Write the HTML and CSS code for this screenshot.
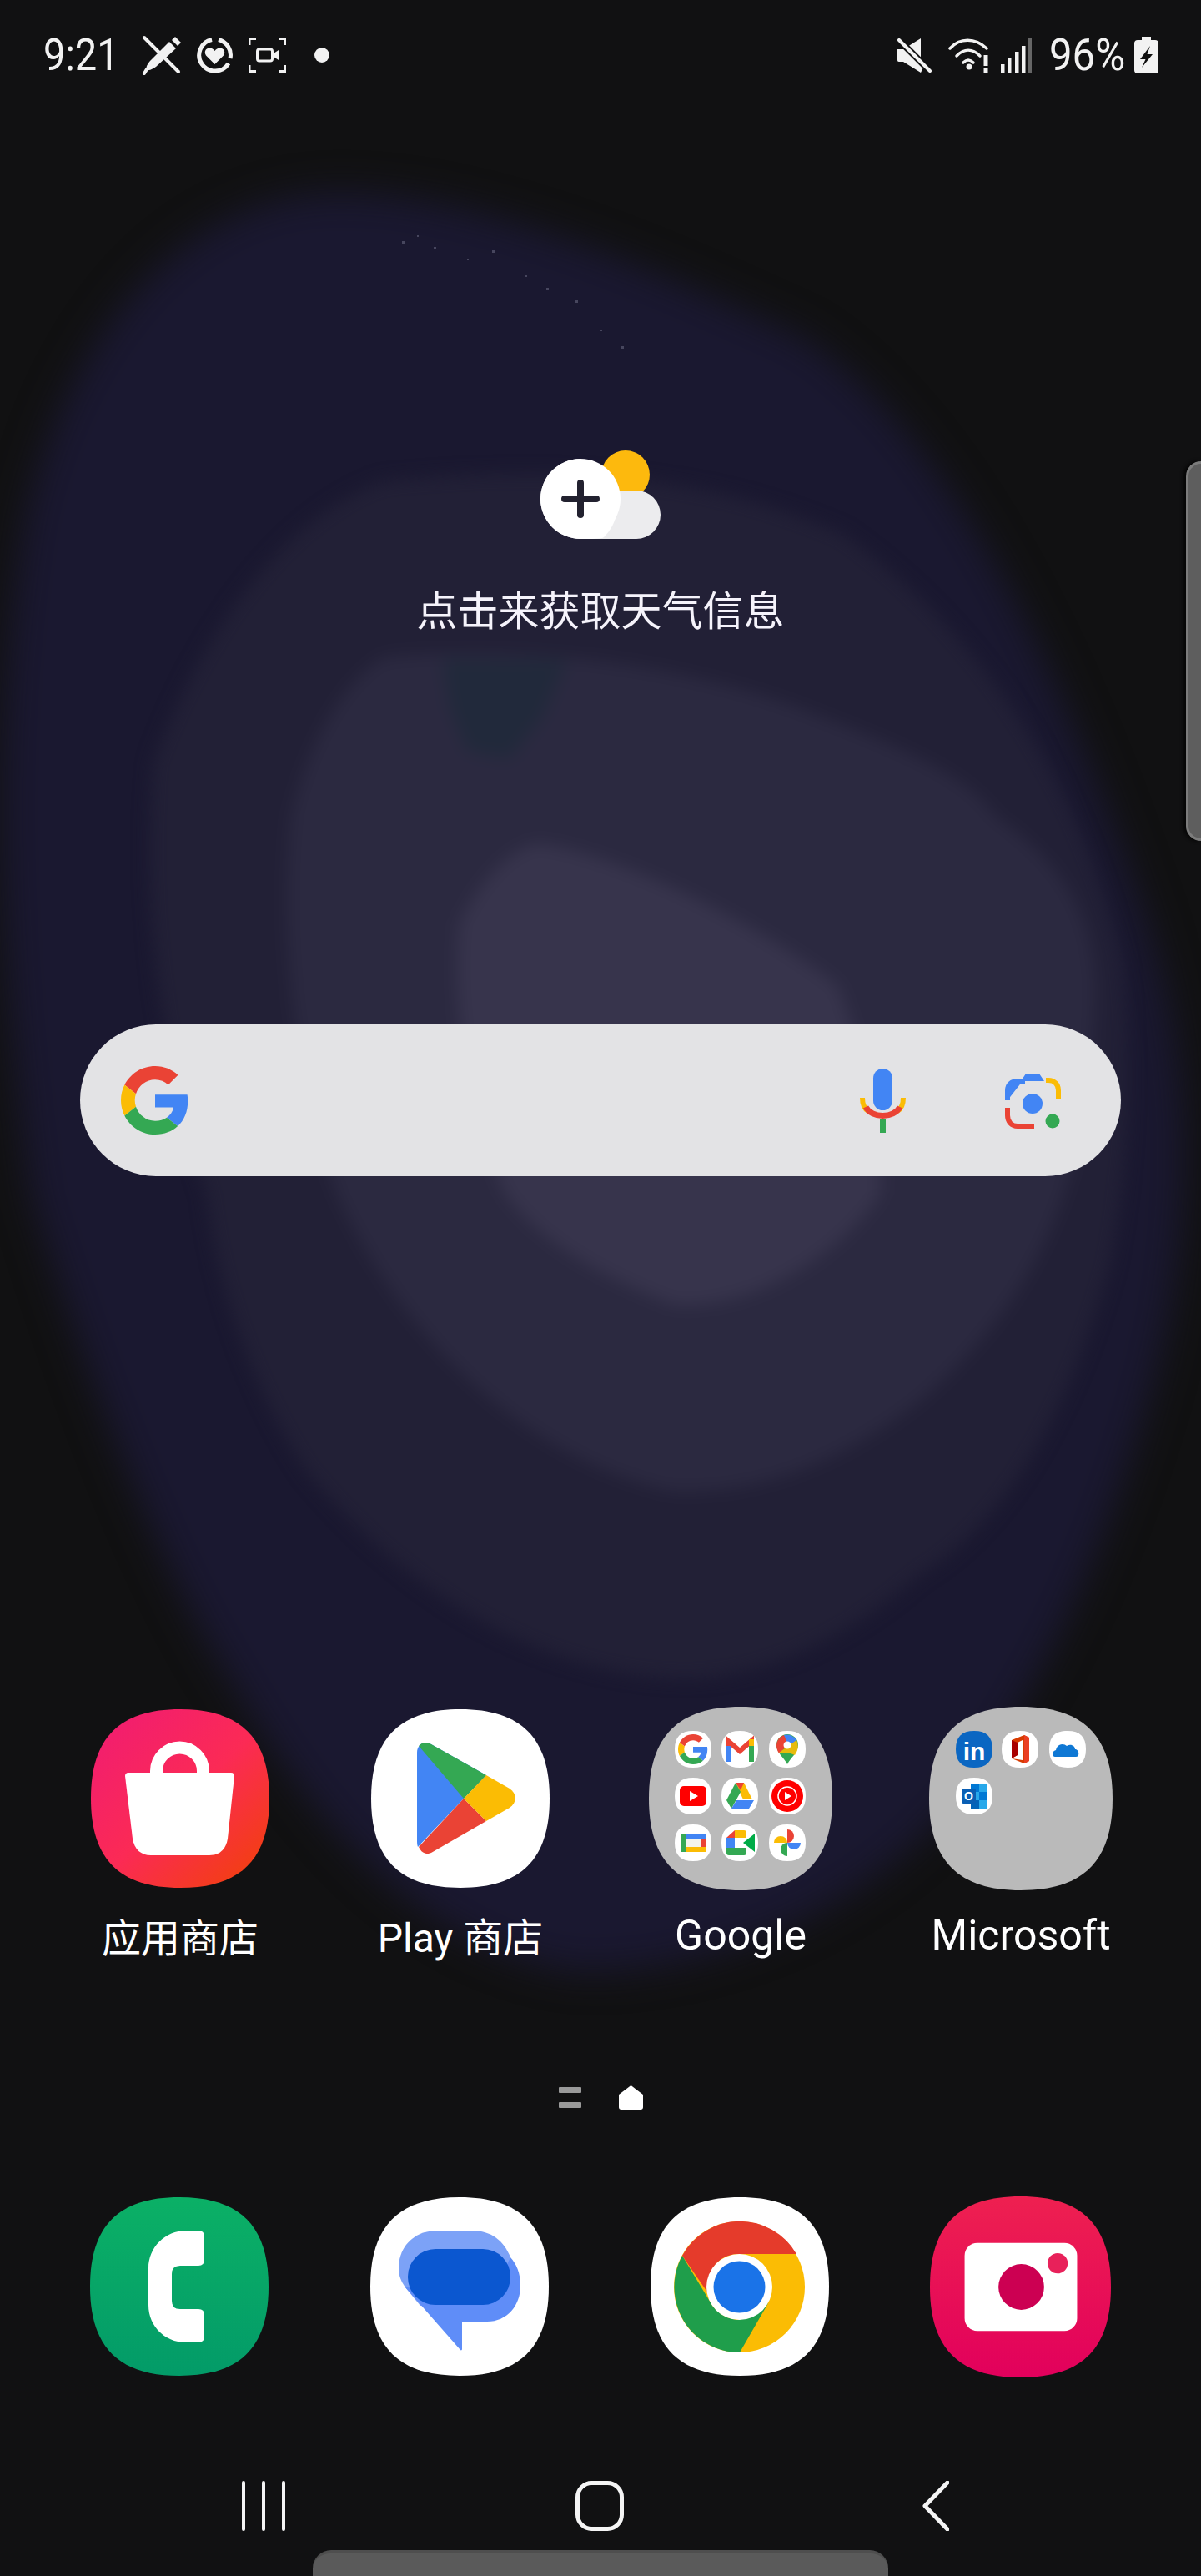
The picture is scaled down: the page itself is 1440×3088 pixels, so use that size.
FILE: index.html
```html
<!DOCTYPE html>
<html lang="zh">
<head>
<meta charset="utf-8">
<title>Home screen</title>
<link rel="stylesheet" href="styles.css">
</head>
<body>
<svg class="defs" aria-hidden="true">
  <defs>
    <path id="sq" d="M50 0C84 0 100 16 100 50C100 84 84 100 50 100C16 100 0 84 0 50C0 16 16 0 50 0Z"/>
    <linearGradient id="shop" x1="0.1" y1="0.1" x2="0.9" y2="0.95"><stop offset="0" stop-color="#f21e6e"/><stop offset="0.5" stop-color="#fb2a55"/><stop offset="1" stop-color="#f23f10"/></linearGradient>
    <linearGradient id="call" x1="0" y1="0" x2="0" y2="1"><stop offset="0" stop-color="#0bb066"/><stop offset="1" stop-color="#039b68"/></linearGradient>
    <linearGradient id="cam" x1="0" y1="0" x2="0" y2="1"><stop offset="0" stop-color="#ee2050"/><stop offset="1" stop-color="#e2005c"/></linearGradient>
    <symbol id="gg" viewBox="0 0 48 48">
      <path fill="#EA4335" d="M24 9.5c3.54 0 6.71 1.22 9.21 3.6l6.85-6.85C35.9 2.38 30.47 0 24 0 14.62 0 6.51 5.38 2.56 13.22l7.98 6.19C12.43 13.72 17.74 9.5 24 9.5z"/>
      <path fill="#4285F4" d="M46.98 24.55c0-1.57-.15-3.09-.38-4.55H24v9.02h12.94c-.58 2.96-2.26 5.48-4.78 7.18l7.73 6c4.51-4.18 7.09-10.36 7.09-17.65z"/>
      <path fill="#FBBC05" d="M10.53 28.59c-.48-1.45-.76-2.99-.76-4.59s.27-3.14.76-4.59l-7.98-6.19C.92 16.46 0 20.12 0 24c0 3.88.92 7.54 2.56 10.78l7.97-6.19z"/>
      <path fill="#34A853" d="M24 48c6.48 0 11.93-2.13 15.89-5.81l-7.73-6c-2.15 1.45-4.92 2.3-8.16 2.3-6.26 0-11.57-4.22-13.47-9.91l-7.98 6.19C6.51 42.62 14.62 48 24 48z"/>
    </symbol>
    <g id="tile"><use href="#sq" transform="translate(-22 -22) scale(.44)" fill="#fff"/></g>
  </defs>
</svg>

<main class="screen">
  <svg class="wallpaper" viewBox="0 0 1440 3088" aria-hidden="true">
    <defs>
      <filter id="soft" x="-15%" y="-15%" width="130%" height="130%" color-interpolation-filters="sRGB"><feGaussianBlur stdDeviation="10"/></filter>
      <filter id="softer" x="-15%" y="-15%" width="130%" height="130%" color-interpolation-filters="sRGB"><feGaussianBlur stdDeviation="22"/></filter>
    </defs>
    <path filter="url(#softer)" fill="#1a1830" d="M380 232C560 220 800 330 964 405C1120 510 1250 730 1377 1107C1440 1300 1430 1500 1377 1680C1320 1870 1260 1990 1194 2090C1100 2260 880 2370 690 2364C520 2340 380 2200 275 2012C190 1880 100 1640 37 1432C-10 1100 -10 850 30 620C70 440 190 250 380 232Z"/>
    <g filter="url(#soft)">
      <path fill="#222036" d="M459 577C640 560 830 560 1010 640C1180 760 1300 950 1345 1150C1360 1300 1350 1420 1331 1515C1280 1700 1200 1830 1102 1888C1020 1960 920 2010 826 2012C640 2010 480 1900 367 1763C300 1660 260 1540 248 1432C190 1260 170 1080 184 915C240 760 340 620 459 577Z"/>
      <path fill="#2b2940" d="M459 788C640 770 830 800 964 851C1090 900 1160 930 1194 979C1280 1040 1310 1100 1313 1183C1310 1420 1240 1560 1102 1680C1010 1750 920 1790 808 1788C630 1750 480 1600 404 1432C350 1280 335 1120 349 979C370 890 410 820 459 788Z"/>
      <path fill="#37344c" d="M643 1011C730 1020 900 1100 1005 1182C1040 1280 1060 1360 1056 1432C1000 1510 900 1570 808 1564C720 1530 650 1490 606 1432C560 1330 540 1200 551 1106C580 1050 610 1020 643 1011Z"/>
      <path fill="#1f2a3a" opacity=".75" d="M530 790H680L650 860L610 910L560 900L540 850Z"/>
    </g>
    <g fill="#47465e"><rect x="482" y="289" width="3" height="3"/><rect x="500" y="282" width="2" height="2"/><rect x="520" y="296" width="3" height="3"/><rect x="560" y="310" width="2" height="2"/><rect x="590" y="300" width="3" height="3"/><rect x="630" y="330" width="2" height="2"/><rect x="655" y="345" width="3" height="3"/><rect x="690" y="360" width="3" height="3"/><rect x="720" y="395" width="2" height="2"/><rect x="745" y="415" width="3" height="3"/></g>
  </svg>

  <header class="status">
    <div class="status-left">
      <span class="clock">9:21</span>
      <svg class="si si-pen" viewBox="0 0 48 48"><path d="M3 3L44 44" stroke="#f2f2f2" stroke-width="4" stroke-linecap="round"/><path d="M40 2L47 9L43 13L36 6Z" fill="#f2f2f2"/><path d="M33 8L41 16L17 38C12 42 8 42 5 43C5 39 6 35 10 31Z" fill="#f2f2f2"/><path d="M3 46L6 41" stroke="#f2f2f2" stroke-width="4" stroke-linecap="round"/></svg>
      <svg class="si si-heart" viewBox="0 0 45 45"><path d="M27 3.500A19 19 0 0 1 41 26" fill="none" stroke="#f2f2f2" stroke-width="5"/><path d="M39 32A19 19 0 1 1 19 3.500" fill="none" stroke="#f2f2f2" stroke-width="5"/><path d="M22.500 33L12 22.500C9 18 12 13.500 16 13.500C19 13.500 21 15 22.500 17C24 15 26 13.500 29 13.500C33 13.500 36 18 33 22.500Z" fill="#f2f2f2"/></svg>
      <svg class="si si-rec" viewBox="0 0 45 42"><path d="M1 9V1.500H9M36 1.500H44V9M44 33V40.500H36M9 40.500H1V33" fill="none" stroke="#f2f2f2" stroke-width="3"/><rect x="10.500" y="14" width="18" height="14" rx="2.500" fill="none" stroke="#f2f2f2" stroke-width="3"/><path d="M30 19L36 15V27L30 23Z" fill="#f2f2f2"/></svg>
      <span class="dot"></span>
    </div>
    <div class="status-right">
      <svg class="si si-mute" viewBox="0 0 42 41"><path d="M1 13H8L29 0V24L40 38L33 33L29 41L8 28H3C1 28 1 27 1 25Z" fill="#f2f2f2"/><path d="M2 1L42 41" stroke="#111" stroke-width="8"/><path d="M3 2L40 39" stroke="#f2f2f2" stroke-width="4" stroke-linecap="round"/></svg>
      <svg class="si si-wifi" viewBox="0 0 50 44"><g fill="none" stroke="#f2f2f2" stroke-width="3.500" stroke-linecap="round"><path d="M2 14C14 1 32 1 46 14"/><path d="M10 23C19 14 29 14 38 23"/><path d="M18 31C22 27 26 27 30 31"/></g><circle cx="25" cy="36" r="3.500" fill="#f2f2f2"/><path d="M45 22V35" stroke="#f2f2f2" stroke-width="5"/><rect x="42.500" y="38" width="5" height="5" fill="#f2f2f2"/></svg>
      <svg class="si si-signal" viewBox="0 0 38 43"><g fill="#f2f2f2"><rect x="0" y="32" width="4.500" height="11"/><rect x="8" y="25" width="4.500" height="18"/><rect x="17" y="17" width="4.500" height="26"/><rect x="25" y="10" width="4.500" height="33"/></g><rect x="32" y="0" width="5" height="43" fill="#666"/></svg>
      <span class="batt-text">96%</span>
      <svg class="si si-batt" viewBox="0 0 29 44"><path d="M9 0H20V4H25C27.500 4 29 5.500 29 8V40C29 42.500 27.500 44 25 44H4C1.500 44 0 42.500 0 40V8C0 5.500 1.500 4 4 4H9Z" fill="#f2f2f2"/><path d="M19 11L7 27H13.500L9 37L22 21H15.500Z" fill="#111"/></svg>
    </div>
  </header>

  <section class="weather">
    <svg class="weather-icon" viewBox="0 0 144 106">
      <circle cx="102" cy="29" r="29" fill="#fdb90d"/>
      <path d="M48 106A47 47 0 0 1 48 10L48 48H115A29 29 0 0 1 115 106Z" fill="#ececee"/>
      <circle cx="48" cy="58" r="48" fill="#fff"/>
      <path d="M48 106C60 106 74 106 76 104C90 90 96 70 90 48L48 48Z" fill="#fff"/>
      <path d="M29 58H67M48 39V77" stroke="#22212f" stroke-width="8" stroke-linecap="round"/>
    </svg>
    <p class="weather-text">点击来获取天气信息</p>
  </section>

  <section class="search">
    <svg class="s-g"><use href="#gg"/></svg>
    <svg class="s-mic" viewBox="0 0 55 77">
      <rect x="16" y="0" width="23" height="50" rx="11.500" fill="#4285f4"/>
      <path d="M3 35C3 43 5 48 10 51" fill="none" stroke="#fbbc05" stroke-width="6"/>
      <path d="M52 35C52 43 50 48 45 51" fill="none" stroke="#fbbc05" stroke-width="6"/>
      <path d="M7 46C14 60 41 60 48 46" fill="none" stroke="#ea4335" stroke-width="7"/>
      <path d="M27.500 60V77" stroke="#34a853" stroke-width="7"/>
    </svg>
    <svg class="s-lens" viewBox="0 0 67 69">
      <path d="M3 34V22C3 15 8 11 15 11H19L25 2H41L47 11H21Z" fill="#4285f4"/>
      <path d="M3 34V22C3 15 8 11 15 11H24" fill="none" stroke="#4285f4" stroke-width="6"/>
      <path d="M49 10H52C59 10 64 15 64 22V32" fill="none" stroke="#fbbc05" stroke-width="6"/>
      <path d="M3 43V52C3 60 8 65 15 65H35" fill="none" stroke="#ea4335" stroke-width="6"/>
      <circle cx="33" cy="38" r="12" fill="#4285f4"/>
      <circle cx="57" cy="59" r="8.500" fill="#34a853"/>
    </svg>
  </section>

  <section class="apps">
    <div class="cell">
      <div class="icon-box">
        <svg class="app" viewBox="0 0 214 214">
          <use href="#sq" transform="scale(2.14)" fill="url(#shop)"/>
          <path d="M78.500 82V74A28 28 0 0 1 134.500 74V82" fill="none" stroke="#fff" stroke-width="15"/>
          <path d="M45 76H168C171 76 172 78 172 80L164 155C162 168 154 175 142 175H72C60 175 52 168 50 155L41 80C41 78 42 76 45 76Z" fill="#fff"/>
        </svg>
      </div>
      <span class="label label-cjk">应用商店</span>
    </div>
    <div class="cell">
      <div class="icon-box">
        <svg class="app" viewBox="0 0 214 214">
          <use href="#sq" transform="scale(2.14)" fill="#fff"/>
          <path d="M55 52C55 42 64 37 72 42L138 79L111 107L56 165C55 162 55 160 55 157Z" fill="#4285f4"/>
          <path d="M57 44C62 39 67 39 72 42L138 79L111 107Z" fill="#34a853"/>
          <path d="M57 165C60 172 66 175 72 172L138 134L111 107Z" fill="#ea4335"/>
          <path d="M138 79L166 95C175 101 175 112 166 118L138 134L111 107Z" fill="#fbbc04"/>
        </svg>
      </div>
      <span class="label label-play">Play 商店</span>
    </div>
    <div class="cell">
      <div class="icon-box">
        <svg class="folder" viewBox="0 0 220 220">
          <use href="#sq" transform="scale(2.2)" fill="#bababa"/>
          <g transform="translate(53 51)"><use href="#tile"/><use href="#gg" x="-18" y="-18" width="36" height="36"/></g>
          <g transform="translate(109 51)"><use href="#tile"/>
            <path d="M-14 15V-10L0 2L14 -10V15" fill="none" stroke="#ea4335" stroke-width="6"/><path d="M-14 15V-4" stroke="#4285f4" stroke-width="6"/><path d="M14 15V-4" stroke="#34a853" stroke-width="6"/><path d="M14 -12V-4" stroke="#fbbc04" stroke-width="6"/></g>
          <g transform="translate(166 51)"><use href="#tile"/>
            <path d="M0 18C-4 10 -13 4 -13 -5A13 13 0 0 1 13 -5C13 4 4 10 0 18Z" fill="#34a853"/><path d="M-13 -5A13 13 0 0 1 -4 -17L4 -8L-10 5C-12 2 -13 -2 -13 -5Z" fill="#ea4335"/><path d="M-4 -17A13 13 0 0 1 11 -11L2 -3Z" fill="#4285f4"/><path d="M-10 4L11 -11C14 -4 13 1 9 7L4 5Z" fill="#fbbc04" opacity=".9"/><circle cy="-5" r="4.500" fill="#fff"/></g>
          <g transform="translate(53 107)"><use href="#tile"/>
            <rect x="-16" y="-12" width="32" height="24" rx="5" fill="#f00"/><path d="M-4 -6L6 0L-4 6Z" fill="#fff"/></g>
          <g transform="translate(109 107)"><use href="#tile"/>
            <path d="M-5 -16H5L15 4H4Z" fill="#fbbc04"/><path d="M-5 -16L-16 5L-10 15L1 -5Z" fill="#34a853"/><path d="M-10 15H11L17 5H-4Z" fill="#4285f4"/><path d="M-5 -16H5L1 -7Z" fill="#ea4335"/></g>
          <g transform="translate(166 107)"><use href="#tile"/>
            <circle r="19" fill="#f00"/><circle r="11" fill="none" stroke="#fff" stroke-width="1.500"/><circle r="7" fill="#f00"/><path d="M-3 -5L5 0L-3 5Z" fill="#fff"/></g>
          <g transform="translate(53 163)"><use href="#tile"/>
            <rect x="-15" y="-11" width="30" height="22" rx="2" fill="#f4f4ec"/><path d="M-15 -11H15V-5H-15Z" fill="#4285f4"/><path d="M-15 -11V11H-9V-11Z" fill="#34a853"/><path d="M15 -5V11H9V-5Z" fill="#ea4335"/><path d="M-9 5H15V11H-9Z" fill="#fbbc04"/></g>
          <g transform="translate(109 163)"><use href="#tile"/>
            <path d="M-16 -6L-6 -15V-6Z" fill="#ea4335"/><path d="M-6 -15H5Q8 -15 8 -12V-6H-6Z" fill="#fbbc04"/><path d="M-16 -6H-6V6H-16Z" fill="#4285f4"/><path d="M-16 6H8V12Q8 15 5 15H-13Q-16 15 -16 12Z" fill="#34a853"/><path d="M4 0L18 -11V11Z" fill="#00ac47"/><rect x="-6" y="-6" width="10" height="12" fill="#fff"/></g>
          <g transform="translate(166 163)"><use href="#tile"/>
            <path d="M0 0V-16A8 8 0 0 1 0 0Z" fill="#ea4335"/><path d="M0 0H16A8 8 0 0 1 0 0Z" fill="#4285f4"/><path d="M0 0V16A8 8 0 0 1 0 0Z" fill="#34a853"/><path d="M0 0H-16A8 8 0 0 1 0 0Z" fill="#fbbc04"/></g>
        </svg>
      </div>
      <span class="label label-folder">Google</span>
    </div>
    <div class="cell">
      <div class="icon-box">
        <svg class="folder" viewBox="0 0 220 220">
          <use href="#sq" transform="scale(2.2)" fill="#bababa"/>
          <g transform="translate(54 51)"><use href="#sq" transform="translate(-22 -22) scale(.44)" fill="#0a66c2"/><text class="tile-in" x="0" y="13" text-anchor="middle">in</text></g>
          <g transform="translate(109 51)"><use href="#tile"/>
            <path d="M-10 -11L5 -17L11 -14V14L5 17L-10 11L3 13V-11L-3 -8V7L-10 11Z" fill="#d83b01"/><path d="M5 -17L11 -14V14L5 17Z" fill="#ea3e23"/><path d="M-10 -11L-3 -8V7L-10 11Z" fill="#a80000"/></g>
          <g transform="translate(166 51)"><use href="#tile"/>
            <path d="M-15 9C-19 9 -19 2 -14 1C-13 -6 -5 -8 -1 -4C4 -7 9 -4 9 0C14 0 15 9 10 9Z" fill="#0f78d4"/></g>
          <g transform="translate(54 107)"><use href="#tile"/>
            <rect x="-4" y="-15" width="19" height="30" fill="#28a8ea"/><rect x="-4" y="-15" width="10" height="10" fill="#0078d4"/><rect x="6" y="-5" width="9" height="10" fill="#0078d4"/><rect x="-4" y="5" width="10" height="10" fill="#0364b8"/><rect x="-15" y="-9" width="17" height="18" rx="2" fill="#0a5fb4"/><text class="tile-o" x="-6.500" y="5" text-anchor="middle">O</text></g>
        </svg>
      </div>
      <span class="label label-folder">Microsoft</span>
    </div>
  </section>

  <div class="pager">
    <svg class="pg-list" viewBox="0 0 27 25"><rect y="0" width="27" height="7" rx="1" fill="#9a9a9a"/><rect y="18" width="27" height="7" rx="1" fill="#9a9a9a"/></svg>
    <svg class="pg-home" viewBox="0 0 29 29"><path d="M14.500 0L29 11V26C29 28 28 29 26 29H3C1 29 0 28 0 26V11Z" fill="#fff"/></svg>
  </div>

  <section class="dock">
    <div class="icon-box">
      <svg class="app" viewBox="0 0 214 214">
        <use href="#sq" transform="scale(2.14)" fill="url(#call)"/>
        <path d="M115 40H130Q137 40 137 47V75Q137 82 130 82H108Q98 82 98 92V124Q98 134 108 134H130Q137 134 137 141V167Q137 174 130 174H115C90 174 70 155 70 129V85C70 60 90 40 115 40Z" fill="#fff"/>
      </svg>
    </div>
    <div class="icon-box">
      <svg class="app" viewBox="0 0 214 214">
        <use href="#sq" transform="scale(2.14)" fill="#fff"/>
        <path d="M34 85C34 58 54 40 80 40H122C145 40 160 52 168 72L160 130H60L42 108C37 101 34 94 34 85Z" fill="#7ca2f7"/>
        <path d="M42 108L108 183C109 184 110 183 110 182V149H140C164 149 180 130 180 106C180 90 175 80 168 72L150 110Z" fill="#5f8df8"/>
        <rect x="45" y="62" width="123" height="67" rx="33" fill="#0b57d0"/>
      </svg>
    </div>
    <div class="icon-box">
      <svg class="app" viewBox="0 0 214 214">
        <use href="#sq" transform="scale(2.14)" fill="#fff"/>
        <circle cx="106.500" cy="107.500" r="78.500" fill="#fbbc04"/>
        <path d="M38 70A78.500 78.500 0 0 1 175 68H106.500C90 68 78 76 72 90L78 128Z" fill="#e53b2b"/>
        <path d="M38 70L73 128C78 137 92 147 106 147L141 127L107 186A78.500 78.500 0 0 1 38 70Z" fill="#1f9e4b"/>
        <circle cx="106.500" cy="107.500" r="39.500" fill="#fff"/>
        <circle cx="106.500" cy="107.500" r="31" fill="#1a73e8"/>
      </svg>
    </div>
    <div class="icon-box">
      <svg class="app app-lg" viewBox="0 0 214 214">
        <use href="#sq" transform="scale(2.14)" fill="url(#cam)"/>
        <rect x="41" y="55" width="133" height="104" rx="15" fill="#fff"/>
        <circle cx="108" cy="107" r="27" fill="#cc0052"/>
        <circle cx="151" cy="79" r="12" fill="#e8215a"/>
      </svg>
    </div>
  </section>

  <nav class="nav">
    <svg class="nav-recent" viewBox="0 0 52 60"><path d="M2 2V58M26 2V58M50 2V58" stroke="#f5f5f5" stroke-width="4" stroke-linecap="round"/></svg>
    <svg class="nav-home" viewBox="0 0 58 60"><rect x="2.500" y="2.500" width="53" height="55" rx="17" fill="none" stroke="#f5f5f5" stroke-width="5"/></svg>
    <svg class="nav-back" viewBox="0 0 32 60"><path d="M30 2L3 30L30 58" fill="none" stroke="#f5f5f5" stroke-width="5" stroke-linecap="round" stroke-linejoin="round"/></svg>
  </nav>

  <div class="edge-handle"></div>
  <div class="bottom-sheet"></div>
</main>
</body>
</html>
```
FILE: styles.css
```css
* { box-sizing: border-box; }
html, body { margin: 0; padding: 0; background: #111112; }
.defs { position: absolute; width: 0; height: 0; }
svg { display: block; }

.screen {
  position: relative;
  width: 1440px;
  height: 3088px;
  overflow: hidden;
  background: #111112;
  display: flex;
  flex-direction: column;
  font-family: Roboto, "Noto Sans CJK SC", sans-serif;
  color: #fff;
}
.screen > * { position: relative; }
.screen > .wallpaper { position: absolute; inset: 0; width: 1440px; height: 3088px; }

/* status bar */
.status {
  height: 132px;
  padding: 0 51px 0 52px;
  display: flex;
  align-items: center;
  justify-content: space-between;
  color: #f2f2f2;
}
.status-left, .status-right { display: flex; align-items: center; }
.clock, .batt-text { font-weight: 400; font-size: 54px; line-height: 60px; transform-origin: left center; white-space: nowrap; }
.clock { width: 91px; transform: scaleX(.87); }
.batt-text { width: 92px; margin-left: 20px; transform: scaleX(.91); }
.si { flex: none; }
.si-pen { width: 48px; height: 48px; margin-left: 27px; }
.si-heart { width: 45px; height: 45px; margin-left: 17px; }
.si-rec { width: 45px; height: 42px; margin-left: 18px; }
.dot { width: 18px; height: 18px; border-radius: 50%; background: #f2f2f2; margin-left: 34px; }
.si-mute { width: 42px; height: 41px; }
.si-wifi { width: 50px; height: 44px; margin-left: 20px; }
.si-signal { width: 38px; height: 43px; margin-left: 13px; }
.si-batt { width: 29px; height: 44px; margin-left: 10px; }

/* weather */
.weather { margin-top: 408px; display: flex; flex-direction: column; align-items: center; }
.weather-icon { width: 144px; height: 106px; }
.weather-text { margin: 56px 0 0; font-size: 49px; line-height: 64px; color: #f5f3fb; white-space: nowrap; }

/* search */
.search {
  margin: 462px 96px 0;
  height: 182px;
  border-radius: 91px;
  background: #e3e3e5;
  display: flex;
  align-items: center;
  padding-left: 49px;
}
.s-g { width: 82px; height: 82px; }
.s-mic { width: 55px; height: 77px; margin-left: 804px; }
.s-lens { width: 67px; height: 69px; margin-left: 119px; }

/* app grid */
.apps { margin-top: 636px; padding: 0 48px; display: grid; grid-template-columns: repeat(4, 336px); }
.cell { display: flex; flex-direction: column; align-items: center; }
.icon-box { height: 220px; display: flex; align-items: center; justify-content: center; }
.app { width: 214px; height: 214px; }
.app-lg { width: 217px; height: 217px; }
.folder { width: 220px; height: 220px; }
.label { margin-top: 28px; line-height: 60px; color: #fff; white-space: nowrap; }
.label-cjk { font-size: 47px; }
.label-play { font-size: 48px; }
.label-folder { font-size: 50px; margin-top: 24px; margin-bottom: 4px; }
.tile-in { font: 700 30px "Liberation Sans", sans-serif; fill: #fff; }
.tile-o { font: 700 14px "Liberation Sans", sans-serif; fill: #fff; }

/* pager */
.pager { margin-top: 146px; height: 29px; display: flex; justify-content: center; align-items: center; gap: 45px; }
.pg-list { width: 27px; height: 25px; }
.pg-home { width: 29px; height: 29px; }

/* dock */
.dock { margin-top: 102px; padding: 0 49px 0 47px; display: grid; grid-template-columns: repeat(4, 336px); }

/* nav */
.nav { margin-top: 123px; height: 60px; display: flex; align-items: center; }
.nav-recent { width: 52px; height: 60px; margin-left: 290px; }
.nav-home { width: 58px; height: 60px; margin-left: 348px; }
.nav-back { width: 32px; height: 60px; margin-left: 358px; }

/* overlays */
.screen > .edge-handle {
  position: absolute; right: 0; top: 553px; width: 18px; height: 455px;
  background: #5e5e5e; border: solid #7c7c7c; border-width: 3px 0 3px 3px;
  border-radius: 18px 0 0 18px;
  box-shadow: -3px 0 4px #050505;
}
.screen > .bottom-sheet {
  position: absolute; left: 375px; top: 3057px; width: 690px; height: 40px;
  background: #5a5a5a; border-top: 4px solid #4e4e4e; border-radius: 22px 22px 0 0;
}
```
